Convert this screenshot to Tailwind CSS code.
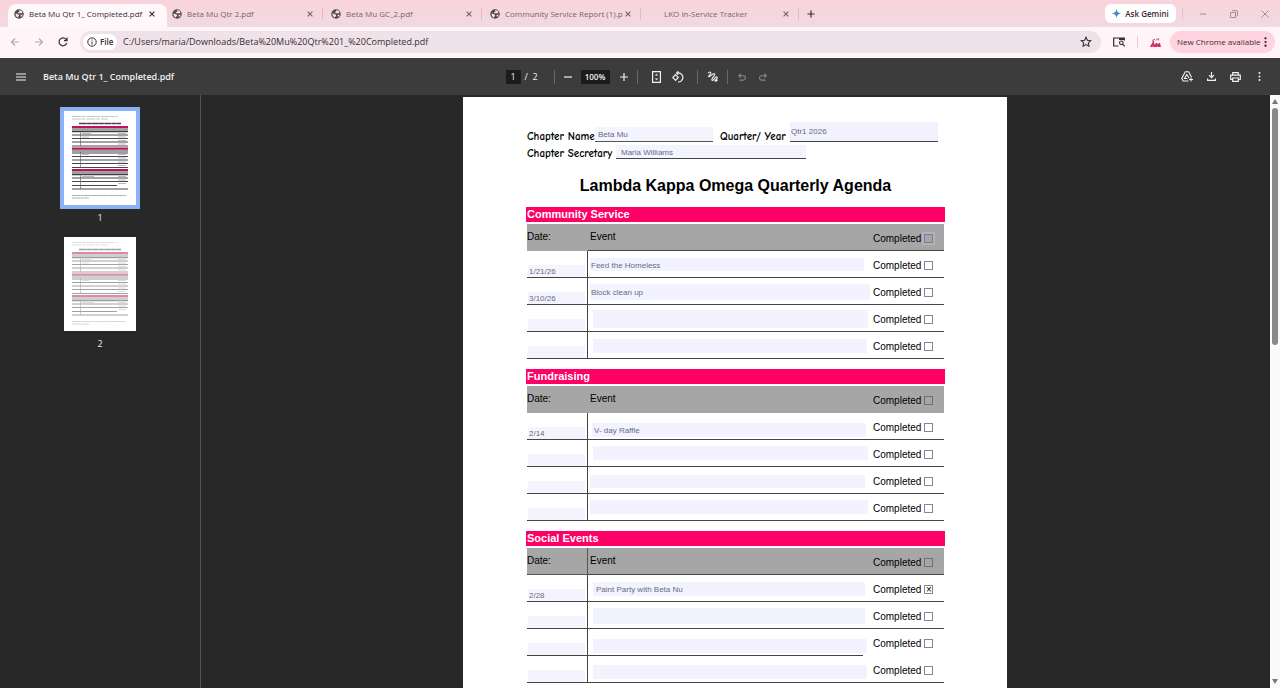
<!DOCTYPE html>
<html lang="en">
<head>
<meta charset="utf-8">
<title>Beta Mu Qtr 1_ Completed.pdf</title>
<script src="https://cdn.jsdelivr.net/npm/@tailwindcss/browser@4"></script>
</head>
<body class="h-screen flex flex-col overflow-hidden bg-[#282828] font-['Segoe_UI','Open_Sans',sans-serif] text-[8px] leading-3 text-[#3a2c31]">

<svg class="hidden">
  <symbol id="globe" viewBox="0 0 20 20"><circle cx="10" cy="10" r="9.5" fill="#55494d"/><path d="M3 9c3-1 4 2 6 2s1 3 0 4-1 2-2 2c-2-1-4-4-4-8zM10 3c3-1 6 1 7 4l-3 2-2-1-2 1-2-1 1-2 2-1zM13 12l4-1c0 2-1 4-3 5z" fill="#f5e6ea"/></symbol>
  <symbol id="x" viewBox="0 0 10 10"><path d="M2 2l6 6M8 2l-6 6" stroke="currentColor" stroke-width="1.4"/></symbol>
  <symbol id="sheet" viewBox="0 0 72 94">
    <path d="M8 5.500h46M8 8h36" stroke="#aaa" stroke-width=".7" stroke-dasharray="9 .5 4 1"/>
    <path d="M15 12.500h42" stroke="#444" stroke-width="1.500" stroke-dasharray="7 .3 5 .3"/>
    <path d="M8 19h56M8 40.500h56M8 62h56" stroke="#a0a0a0" stroke-width="5"/>
    <path d="M8 16h56M8 37.500h56M8 59h56" stroke="#c2115c" stroke-width="2.200"/>
    <path d="M8 20.500h56M8 24h56M8 27.500h56M8 31h56M8 35h56M8 45.500h56M8 49h56M8 52.500h56M8 56.500h56M8 63.500h56M8 67h56M8 70.500h56M8 74.500h45M8 78h56" stroke="#333" stroke-width=".9"/>
    <path d="M16.500 20v15M16.500 41v15.500M16.500 63v15" stroke="#555" stroke-width=".6"/>
    <path d="M54 22.500h8M54 26h8M54 29.500h8M54 33h8M54 43.500h8M54 47h8M54 51h8M54 54.500h8M54 65.500h8M54 69h8M54 72.500h8M18 22.500h9M18 26h7M18 43.500h7M18 65.500h12" stroke="#aaa" stroke-width=".8"/>
    <path d="M8 84.500h54M8 87h17" stroke="#999" stroke-width=".8" stroke-dasharray="3 .3 5 .3"/>
  </symbol>
</svg>

<!-- Tab strip -->
<header class="h-[27px] shrink-0 flex items-end pl-2 bg-linear-to-b from-[#fad3dc] to-[#f0dae0]">
  <nav class="flex h-[23px]" aria-label="Tabs">
    <a href="#" class="w-[159px] pl-[6px] pr-[11px] pb-1 flex items-center gap-[5px] rounded-t-lg bg-[#fff8fa]"><svg class="size-[10px]"><use href="#globe"/></svg><span class="flex-1 whitespace-nowrap overflow-hidden">Beta Mu Qtr 1_ Completed.pdf</span><button aria-label="Close"><svg class="size-2"><use href="#x"/></svg></button></a>
    <a href="#" class="w-[158px] pl-[5px] pr-[2px] pb-1 flex items-center gap-[5px] text-[#75656b]"><svg class="size-[10px]"><use href="#globe"/></svg><span class="flex-1 whitespace-nowrap overflow-hidden">Beta Mu Qtr 2.pdf</span><button class="mr-[3px]" aria-label="Close"><svg class="size-2"><use href="#x"/></svg></button><span class="w-px h-3 bg-[#d8c0c7]"></span></a>
    <a href="#" class="w-[159px] pl-[6px] pr-[2px] pb-1 flex items-center gap-[5px] text-[#75656b]"><svg class="size-[10px]"><use href="#globe"/></svg><span class="flex-1 whitespace-nowrap overflow-hidden">Beta Mu GC_2.pdf</span><button class="mr-[3px]" aria-label="Close"><svg class="size-2"><use href="#x"/></svg></button><span class="w-px h-3 bg-[#d8c0c7]"></span></a>
    <a href="#" class="w-[159px] pl-[6px] pr-[2px] pb-1 flex items-center gap-[5px] text-[#75656b]"><svg class="size-[10px]"><use href="#globe"/></svg><span class="flex-1 -mr-1 whitespace-nowrap">Community Service Report (1).p</span><button class="mr-[3px]" aria-label="Close"><svg class="size-2"><use href="#x"/></svg></button><span class="w-px h-3 bg-[#d8c0c7]"></span></a>
    <a href="#" class="w-[158px] pl-[21px] pr-[2px] pb-1 flex items-center gap-[5px] text-[#75656b]"><span class="flex-1 whitespace-nowrap overflow-hidden">LKO In-Service Tracker</span><button class="mr-[3px]" aria-label="Close"><svg class="size-2"><use href="#x"/></svg></button><span class="w-px h-3 bg-[#d8c0c7]"></span></a>
  </nav>
  <button class="h-[23px] w-5 pb-1 flex items-center justify-center" aria-label="New tab"><svg class="size-2" viewBox="0 0 8 8"><path d="M4 .5v7M.5 4h7" stroke="currentColor" stroke-width="1.200"/></svg></button>
  <button class="ml-auto mb-1 h-[19px] w-[71px] flex items-center justify-center gap-1 rounded-md bg-white font-semibold whitespace-nowrap"><svg class="size-[9px]" viewBox="0 0 10 10"><path d="M5 0Q5.500 4.500 10 5Q5.500 5.500 5 10Q4.500 5.500 0 5Q4.500 4.500 5 0z" fill="#3f7de0"/><path d="M0 5Q4.500 4.500 5 0L5 5z" fill="#58a77a"/></svg>Ask Gemini</button>
  <div class="ml-[6px] mb-2 h-3 w-px bg-[#d8c3c9]"></div>
  <div class="h-[23px] pb-1 flex items-center text-[#a08f94]">
    <button class="w-[31px] ml-1 flex justify-center" aria-label="Minimize"><svg class="size-2" viewBox="0 0 8 8"><path d="M1 4h6" stroke="currentColor"/></svg></button>
    <button class="w-[31px] flex justify-center" aria-label="Restore"><svg class="size-2" viewBox="0 0 8 8"><path d="M.5 2.500h5v5h-5zM2 1Q2 .5 3 .5h3q1.500 0 1.500 1.500v3q0 1-1 1" fill="none" stroke="currentColor"/></svg></button>
    <button class="w-[31px] flex justify-center" aria-label="Close window"><svg class="size-2" viewBox="0 0 8 8"><path d="M.5.5l7 7M7.500.5l-7 7" stroke="currentColor"/></svg></button>
  </div>
</header>

<!-- Address bar -->
<div class="h-[31px] shrink-0 flex items-center pb-px pl-[3px] pr-[5px] bg-[#fff4f7]">
  <button class="w-6 flex justify-center text-[#b5a9ad]" aria-label="Back"><svg class="w-[22px] h-[10px]" viewBox="0 0 22 10"><path d="M15 5H7.500M11 1.500L7.500 5L11 8.500" fill="none" stroke="currentColor" stroke-width="1.200"/></svg></button>
  <button class="w-6 flex justify-center text-[#b5a9ad]" aria-label="Forward"><svg class="w-[22px] h-[10px]" viewBox="0 0 22 10"><path d="M7 5h7.500M11 1.500L14.500 5L11 8.500" fill="none" stroke="currentColor" stroke-width="1.200"/></svg></button>
  <button class="w-[23px] flex justify-center" aria-label="Reload"><svg class="size-[10px]" viewBox="0 0 10 10"><path d="M8.700 6A3.900 3.900 0 1 1 8 2.400L8.800 3.400M9 .6v3H6" fill="none" stroke="currentColor" stroke-width="1.200"/></svg></button>
  <div class="ml-[6px] flex-1 h-[22px] rounded-full bg-[#efe3e9] flex items-center pl-[3px] pr-[9px]">
    <button class="h-4 w-[34px] rounded-full bg-white flex items-center gap-[3px] pl-1 font-semibold"><svg class="size-[10px] shrink-0" viewBox="0 0 10 10"><circle cx="5" cy="5" r="4.200" fill="none" stroke="currentColor"/><path d="M5 4.500v3M5 2.500v1" stroke="currentColor"/></svg>File</button>
    <input aria-label="Address" class="ml-[6px] flex-1 min-w-0 text-[9px] leading-4 bg-transparent outline-none" value="C:/Users/maria/Downloads/Beta%20Mu%20Qtr%201_%20Completed.pdf">
    <button aria-label="Bookmark"><svg class="size-3" viewBox="0 0 12 12"><path d="M6 1.300l1.400 3 3.300.4-2.400 2.200.6 3.300L6 8.600l-2.900 1.600.6-3.300L1.300 4.700l3.300-.4z" fill="none" stroke="currentColor" stroke-width="1.100"/></svg></button>
  </div>
  <button class="ml-3 w-3" aria-label="Search page"><svg class="w-3 h-[10px]" viewBox="0 0 12 10"><path d="M5.500 9H.7V1h10.600v2.500" fill="none" stroke="currentColor" stroke-width="1.200"/><path d="M6 1h5.500v2H6z" fill="currentColor"/><circle cx="8.300" cy="5.800" r="1.800" fill="none" stroke="currentColor" stroke-width="1.100"/><path d="M9.600 7.100l2.100 2.300" stroke="currentColor" stroke-width="1.200"/></svg></button>
  <div class="ml-3 w-px h-3 bg-[#e6cfd6]"></div>
  <button class="ml-3 w-[11px]" aria-label="Extension"><svg class="w-[11px] h-[9px]" viewBox="0 0 11 9"><path d="M0 9l1.200-2.500L2.500 5V2.500h1.500V5L5 7l.8-2h1.400L8 6.500 9 5h1l1 4z" fill="#d3265e"/><path d="M2.500 2.500L4 1l1.500 1.500M6 1.500l3-.8-1 2" stroke="#8c5f72" fill="none" stroke-width=".8"/><path d="M3 9V7.500M7.500 9V7.800" stroke="#ffe3eb" stroke-width=".6"/></svg></button>
  <button class="ml-[9px] h-[22px] w-[105px] rounded-full bg-[#ffd3df] flex items-center justify-between pl-[7px] pr-2 whitespace-nowrap">New Chrome available<svg class="w-[3px] h-[10px]" viewBox="0 0 3 10"><g fill="#3a1420"><circle cx="1.500" cy="1.300" r="1.100"/><circle cx="1.500" cy="5" r="1.100"/><circle cx="1.500" cy="8.700" r="1.100"/></g></svg></button>
</div>

<!-- PDF viewer toolbar -->
<div class="h-[37px] shrink-0 grid grid-cols-[1fr_auto_1fr] items-center px-[11px] bg-[#3c3c3c] text-[#f1f1f1]">
  <div class="flex items-center">
    <button class="w-5 flex justify-center" aria-label="Menu"><svg class="w-[10px] h-2" viewBox="0 0 10 8"><path d="M0 1h10M0 4h10M0 7h10" stroke="currentColor" stroke-width="1.100"/></svg></button>
    <h1 class="ml-3 text-[9px] font-semibold whitespace-nowrap">Beta Mu Qtr 1_ Completed.pdf</h1>
  </div>
  <div class="flex items-center mr-[2px]">
    <input aria-label="Page" value="1" class="w-[15px] h-[14px] bg-[#1c1c1c] text-center text-[9px] outline-none">
    <span class="ml-1 w-7 whitespace-pre text-[9px]">/  2</span>
    <div class="ml-px w-px h-[14px] bg-[#686868]"></div>
    <button class="ml-[3px] w-5 flex justify-center" aria-label="Zoom out"><svg class="size-2" viewBox="0 0 8 8"><path d="M0 4h8" stroke="currentColor" stroke-width="1.200"/></svg></button>
    <input aria-label="Zoom" value="100%" class="ml-[3px] w-[29px] h-[14px] bg-[#1c1c1c] text-center font-semibold outline-none">
    <button class="ml-1 w-5 flex justify-center" aria-label="Zoom in"><svg class="size-2" viewBox="0 0 8 8"><path d="M0 4h8M4 0v8" stroke="currentColor" stroke-width="1.200"/></svg></button>
    <div class="ml-[3px] w-px h-[14px] bg-[#686868]"></div>
    <button class="ml-[9px] w-5 flex justify-center" aria-label="Fit to page"><svg class="w-[9px] h-3" viewBox="0 0 9 12"><path d="M.6.6h7.800v10.800H.6z" fill="none" stroke="currentColor" stroke-width="1.200"/><path d="M2.800 4.500l1.700-1.800 1.700 1.800zM2.800 7.500l1.700 1.800 1.700-1.800z" fill="currentColor"/></svg></button>
    <button class="ml-px w-5 flex justify-center" aria-label="Rotate"><svg class="size-3" viewBox="0 0 12 12"><path d="M3.500 3.700L6.300 6.500 3.500 9.300.8 6.500zM4.500 1.800h2A4.500 4.500 0 1 1 6 11M6.300.2L4.600 1.900l1.700 1.700" fill="none" stroke="currentColor" stroke-width="1.200"/></svg></button>
    <div class="ml-[9px] w-px h-[14px] bg-[#686868]"></div>
    <button class="ml-[5px] w-5 flex justify-center" aria-label="Draw"><svg class="size-[11px]" viewBox="0 0 11 11"><path d="M1 2.300C2 .6 4 .6 3.800 2.200S1 4.600 1.700 5.600 4.500 3.700 6 3s2.500 0 1 1.800S4.200 8.300 5 9.200 7.500 7.500 8.500 6.300 10.500 6 10 7.500 7.500 9 8 9.800s1.500.2 2.500-.8" fill="none" stroke="currentColor" stroke-width="1.100"/></svg></button>
    <div class="ml-1 w-px h-[14px] bg-[#686868]"></div>
    <button class="ml-1 w-5 flex justify-center text-[#888]" aria-label="Undo"><svg class="size-2" viewBox="0 0 8 8"><path d="M2.800.7L.8 2.700l2 2M1 2.700h4.300a2.200 2.200 0 0 1 0 4.400H1.500" fill="none" stroke="currentColor" stroke-width="1.100"/></svg></button>
    <button class="ml-px w-5 flex justify-center text-[#888]" aria-label="Redo"><svg class="size-2" viewBox="0 0 8 8"><path d="M5.200.7l2 2-2 2M7 2.700H2.700a2.200 2.200 0 0 0 0 4.400h3.800" fill="none" stroke="currentColor" stroke-width="1.100"/></svg></button>
  </div>
  <div class="flex items-center justify-end gap-1">
    <button class="w-5 flex justify-center" aria-label="Save to Drive"><svg class="w-3 h-[11px]" viewBox="0 0 12 11"><path d="M7.500 10H2.200L.7 7.500 4.300.8h3.200L10.500 6" fill="none" stroke="currentColor" stroke-width="1.100"/><path d="M6.500 7.500h-3L5.800 3.500 8 7" fill="none" stroke="currentColor" stroke-width="1.100"/><path d="M10 6.500v4M8 8.500h4" stroke="currentColor" stroke-width="1.100"/></svg></button>
    <button class="w-5 flex justify-center" aria-label="Download"><svg class="size-[9px]" viewBox="0 0 9 9"><path d="M4.500 0v5.500M2 3.200l2.500 2.500L7 3.200M.6 6.500v1.900h7.800V6.500" fill="none" stroke="currentColor" stroke-width="1.200"/></svg></button>
    <button class="w-5 flex justify-center" aria-label="Print"><svg class="w-[11px] h-[10px]" viewBox="0 0 11 10"><path d="M2.700 3V.7h5.600V3M2.500 7.500H.7V3.200h9.600v4.300H8.500M2.700 6h5.600v3.300H2.700z" fill="none" stroke="currentColor" stroke-width="1.200"/></svg></button>
    <button class="w-5 flex justify-center" aria-label="More"><svg class="w-[3px] h-[9px]" viewBox="0 0 3 9"><g fill="currentColor"><circle cx="1.500" cy="1" r="1"/><circle cx="1.500" cy="4.500" r="1"/><circle cx="1.500" cy="8" r="1"/></g></svg></button>
  </div>
</div>

<div class="flex-1 min-h-0 flex">
  <!-- Page thumbnails -->
  <aside class="w-[201px] shrink-0 border-r border-[#555] pt-3 flex flex-col items-center text-[9px] text-[#e8e8e8]">
    <button class="flex flex-col items-center"><span class="border-4 border-[#8ab0f5] bg-white"><svg class="w-[72px] h-[94px]"><use href="#sheet"/></svg></span><span class="mt-[3px]">1</span></button>
    <button class="mt-[13px] flex flex-col items-center"><span class="bg-white"><svg class="w-[72px] h-[94px] opacity-50"><use href="#sheet"/></svg></span><span class="mt-[7px]">2</span></button>
  </aside>

  <!-- Document -->
  <main class="flex-1 overflow-hidden pt-[2px] pr-px font-['Liberation_Sans',Arial,sans-serif]">
    <article class="mx-auto w-[544px] bg-white pl-[63px] pr-[62px] pt-6 pb-16 text-black">
      <form>
        <div class="flex items-end h-[21px] font-['Comic_Sans_MS','Comic_Neue',Lato,sans-serif] text-[11px] leading-[10px] pl-px whitespace-nowrap">
          <label for="chapter" class="w-[68px] font-bold">Chapter Name</label>
          <input id="chapter" value="Beta Mu" class="w-[118px] h-[15px] pl-[3px] bg-[#f4f4fe] border-b border-[#555] text-[8px] text-[#666c80] font-['Liberation_Sans',Arial,sans-serif] outline-none">
          <label for="quarter" class="ml-[7px] w-[70px] font-bold">Quarter/ Year</label>
          <input id="quarter" value="Qtr1 2026" class="w-[148px] h-5 pl-px bg-[#f2f2fe] border-b border-[#444] text-[8px] text-[#666c80] font-['Liberation_Sans',Arial,sans-serif] outline-none">
        </div>
        <div class="flex items-end h-[17px] font-['Comic_Sans_MS','Comic_Neue',Lato,sans-serif] text-[11px] leading-[10px] pl-px whitespace-nowrap">
          <label for="secretary" class="w-[89px] font-bold">Chapter Secretary</label>
          <input id="secretary" value="Maria Williams" class="w-[190px] h-[14px] pt-px pl-[5px] bg-[#f4f4fe] border-b border-[#444] text-[8px] text-[#666c80] font-['Liberation_Sans',Arial,sans-serif] outline-none">
        </div>
        <h2 class="mt-[17px] text-center text-[16px] leading-5 font-bold">Lambda Kappa Omega Quarterly Agenda</h2>
        <div id="sections" class="mt-[11px] flex flex-col gap-[10px]"></div>
      </form>
    </article>
  </main>

  <!-- Scrollbar -->
  <div class="w-[10px] shrink-0 bg-[#fafafa] flex flex-col items-center justify-between py-1">
    <div class="flex flex-col items-center gap-1"><svg class="w-[6px] h-[5px]" viewBox="0 0 6 5"><path d="M3 0l3 5H0z" fill="#777"/></svg><div class="w-[6px] h-[237px] rounded-full bg-[#8a8a8a]"></div></div>
    <svg class="w-[6px] h-[5px]" viewBox="0 0 6 5"><path d="M3 5l3-5H0z" fill="#777"/></svg>
  </div>
</div>

<script>
// Section: title, header divider colour, header rule colour, header tick box classes, rows.
// Row: date, event, placement classes of the event field, completed, rule stops before the last column.
const sections = [
  ['Community Service', 'border-[#a6a6a6]', 'border-[#444]', 'border-[#7c7c92] ring-2 ring-[#b2b2be]', [
    ['1/21/26', 'Feed the Homeless', 'mt-[7px] ml-[2px] w-[274px] h-[13px] pl-px'],
    ['3/10/26', 'Block clean up', 'mt-[6px] ml-[2px] w-[280px] h-4 pl-px'],
    ['', '', 'mt-[5px] ml-[5px] w-[275px] h-[18px] pl-[2px]'],
    ['', '', 'mt-[7px] ml-[5px] w-[274px] h-[14px] pl-[2px]']]],
  ['Fundraising', 'border-[#555]', 'border-[#a6a6a6]', 'border-[#6c6c7a]', [
    ['2/14', 'V- day Raffle', 'mt-[10px] ml-[4px] w-[274px] h-[14px] pl-[2px]'],
    ['', '', 'mt-[6px] ml-[5px] w-[275px] h-[14px] pl-[2px]'],
    ['', '', 'mt-[8px] ml-[2px] w-[275px] h-[13px] pl-[2px]'],
    ['', '', 'mt-[6px] ml-[2px] w-[278px] h-[14px] pl-[2px]']]],
  ['Social Events', 'border-[#555]', 'border-[#444]', 'border-[#6c6c7a]', [
    ['2/28', 'Paint Party with Beta Nu', 'mt-[7px] ml-[5px] w-[272px] h-[14px] pl-[3px]', true],
    ['', '', 'mt-[6px] ml-[5px] w-[272px] h-4 pl-[2px]'],
    ['', '', 'mt-[10px] ml-[5px] w-[274px] h-[14px] pl-[2px]', false, true],
    ['', '', 'mt-[9px] ml-[5px] w-[274px] h-[14px] pl-[2px]']]]
];
const tick = (on, look) => `<label class="flex items-center gap-[3px] pt-1 text-[10px] leading-3">Completed<input type="checkbox" ${on ? 'checked' : ''} class="appearance-none size-[9px] mb-px border flex items-center justify-center checked:before:content-['×'] checked:before:text-[10px] checked:before:leading-[7px] ${look}"></label>`;
document.getElementById('sections').innerHTML = sections.map(([title, divider, headRule, headTick, rows]) => `
<section>
  <h3 class="h-[15px] mb-[2px] pl-px bg-[#ff0066] text-white text-[11px] leading-[14px] font-bold">${title}</h3>
  <div class="px-px">
  <table class="w-full table-fixed border-separate border-spacing-0 text-left text-[10px] leading-3">
    <colgroup><col class="w-[61px]"><col><col class="w-[81px]"></colgroup>
    <thead><tr class="h-[27px] bg-[#a6a6a6]">
      <th class="p-0 border-b border-r font-normal ${headRule} ${divider}">Date:</th>
      <th class="p-0 pl-[2px] border-b font-normal ${headRule}">Event</th>
      <th class="p-0 pl-[10px] border-b font-normal ${headRule}">${tick(false, headTick)}</th>
    </tr></thead>
    <tbody>${rows.map(([date, event, place, done, short]) => `<tr class="h-[27px]">
      <td class="p-0 border-b border-r border-[#444] align-bottom"><input aria-label="Date" value="${date}" class="block ml-px w-[57px] h-3 pt-px pl-px bg-[#f4f4fe] text-[8px] text-[#666c80] outline-none"></td>
      <td class="p-0 border-b border-[#444] align-top"><input aria-label="Event" value="${event}" class="block pt-px bg-[#f2f3fe] text-[8px] text-[#666c80] outline-none ${place}"></td>
      <td class="p-0 pl-[10px] border-b ${short ? 'border-transparent' : 'border-[#444]'}">${tick(done, 'border-[#85859a]')}</td>
    </tr>`).join('')}</tbody>
  </table></div>
</section>`).join('');
</script>
</body>
</html>
